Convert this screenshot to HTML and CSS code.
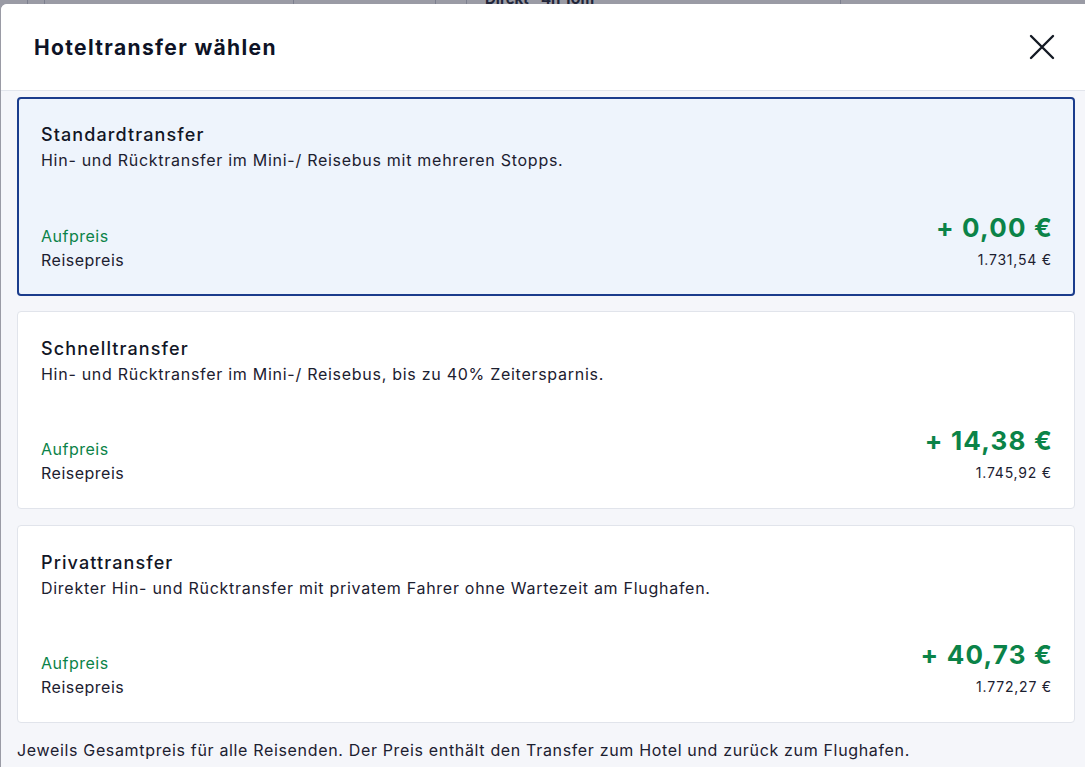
FILE: index.html
```html
<!DOCTYPE html>
<html lang="de">
<head>
<meta charset="utf-8">
<title>Hoteltransfer wählen</title>
<link rel="stylesheet" href="styles.css">
</head>
<body>
<div class="backdrop">
  <div class="bd-cell bd-c1"></div>
  <div class="bd-cell bd-c2"></div>
  <div class="bd-cell bd-c3"></div>
  <div class="bd-cell bd-c4"></div>
  <div class="bd-cell bd-c5"></div>
  <div class="bd-cell bd-c6"><span class="bd-text">Direkt · 4h 10m</span></div>
</div>
<div class="modal">
  <header class="modal-header">
    <h1 class="modal-title">Hoteltransfer wählen</h1>
    <button class="close" aria-label="Schließen">
      <svg width="28" height="28" viewBox="0 0 28 28"><path d="M3 3 L25 25 M25 3 L3 25" stroke="#141a24" stroke-width="2.4" fill="none" stroke-linecap="round"/></svg>
    </button>
  </header>
  <div class="modal-body">
    <div class="card selected">
      <div class="card-title">Standardtransfer</div>
      <div class="card-desc">Hin- und Rücktransfer im Mini-/ Reisebus mit mehreren Stopps.</div>
      <div class="card-bottom">
        <div class="labels">
          <div class="label-green">Aufpreis</div>
          <div class="label">Reisepreis</div>
        </div>
        <div class="prices">
          <div class="price-big">+ 0,00 €</div>
          <div class="price-small">1.731,54 €</div>
        </div>
      </div>
    </div>
    <div class="card">
      <div class="card-title">Schnelltransfer</div>
      <div class="card-desc">Hin- und Rücktransfer im Mini-/ Reisebus, bis zu 40% Zeitersparnis.</div>
      <div class="card-bottom">
        <div class="labels">
          <div class="label-green">Aufpreis</div>
          <div class="label">Reisepreis</div>
        </div>
        <div class="prices">
          <div class="price-big">+ 14,38 €</div>
          <div class="price-small">1.745,92 €</div>
        </div>
      </div>
    </div>
    <div class="card">
      <div class="card-title">Privattransfer</div>
      <div class="card-desc">Direkter Hin- und Rücktransfer mit privatem Fahrer ohne Wartezeit am Flughafen.</div>
      <div class="card-bottom">
        <div class="labels">
          <div class="label-green">Aufpreis</div>
          <div class="label">Reisepreis</div>
        </div>
        <div class="prices">
          <div class="price-big">+ 40,73 €</div>
          <div class="price-small">1.772,27 €</div>
        </div>
      </div>
    </div>
    <p class="note">Jeweils Gesamtpreis für alle Reisenden. Der Preis enthält den Transfer zum Hotel und zurück zum Flughafen.</p>
  </div>
</div>
</body>
</html>
```
FILE: styles.css
```css
* { box-sizing: border-box; }
html, body {
  margin: 0;
  padding: 0;
  height: 100%;
  overflow: hidden;
}
body {
  background: #9a9ba5;
  font-family: Inter, "Noto Sans", "Liberation Sans", sans-serif;
  color: #16192a;
  padding-left: 1px;
}
.backdrop {
  height: 4px;
  display: flex;
  overflow: hidden;
  margin-left: -1px;
}
.bd-cell {
  height: 4px;
  border-right: 1px solid #7c7f8e;
  position: relative;
  flex: none;
}
.bd-c1 { width: 28px; }
.bd-c2 { width: 17px; }
.bd-c3 { width: 249px; }
.bd-c4 { width: 142px; }
.bd-c5 { width: 31px; }
.bd-c6 { width: 374px; }
.bd-text {
  position: absolute;
  left: 18px;
  top: -10px;
  font-weight: 700;
  font-size: 15px;
  line-height: 18px;
  white-space: nowrap;
  color: #22263a;
}
.modal {
  width: 1100px;
  height: 763px;
  background: #f5f6fa;
  border-radius: 6px 6px 0 0;
  overflow: hidden;
}
.modal-header {
  height: 87px;
  background: #fff;
  border-bottom: 1px solid #e2e5ec;
  display: flex;
  align-items: center;
  justify-content: space-between;
  padding: 0 29px 0 33px;
  width: 1084px;
}
.modal-title {
  margin: 0;
  font-size: 21px;
  font-weight: 700;
  letter-spacing: 1.35px;
  color: #0e1326;
}
.close {
  border: 0;
  background: transparent;
  padding: 0;
  width: 28px;
  height: 28px;
  cursor: pointer;
  display: flex;
}
.modal-body {
  padding: 6px 0 0 16px;
  width: 1074px;
  display: flex;
  flex-direction: column;
  gap: 16px;
}
.card {
  background: #fff;
  border: 1px solid #e1e4eb;
  border-radius: 4px;
  padding: 24px 22px 23px 23px;
  height: 198px;
  display: flex;
  flex-direction: column;
}
.card.selected {
  background: #eef4fc;
  border: 2px solid #1b3c8c;
  padding: 23px 21px 22px 22px;
  height: 199px;
  margin-bottom: -1px;
}
.card-title {
  font-size: 18px;
  font-weight: 500;
  line-height: 26px;
  letter-spacing: 1.1px;
  color: #121626;
}
.card-desc {
  font-size: 16px;
  line-height: 22px;
  letter-spacing: 0.72px;
  margin-top: 1px;
  color: #1c2030;
}
.card-bottom {
  margin-top: auto;
  display: flex;
  justify-content: space-between;
  align-items: flex-end;
}
.labels {
  font-size: 16px;
  line-height: 24px;
  letter-spacing: 0.5px;
}
.label-green { color: #0b8348; }
.label { color: #1c2030; }
.prices {
  text-align: right;
}
.price-big {
  font-size: 26px;
  font-weight: 700;
  line-height: 32px;
  letter-spacing: 1.2px;
  margin-right: -1px;
  color: #0b8348;
  margin-bottom: 6px;
}
.price-small {
  font-size: 14px;
  line-height: 20px;
  letter-spacing: 0.8px;
  color: #1c2030;
  margin-bottom: 2px;
}
.note {
  margin: 0;
  font-size: 16px;
  line-height: 22px;
  letter-spacing: 0.66px;
  color: #1c2030;
}
```
